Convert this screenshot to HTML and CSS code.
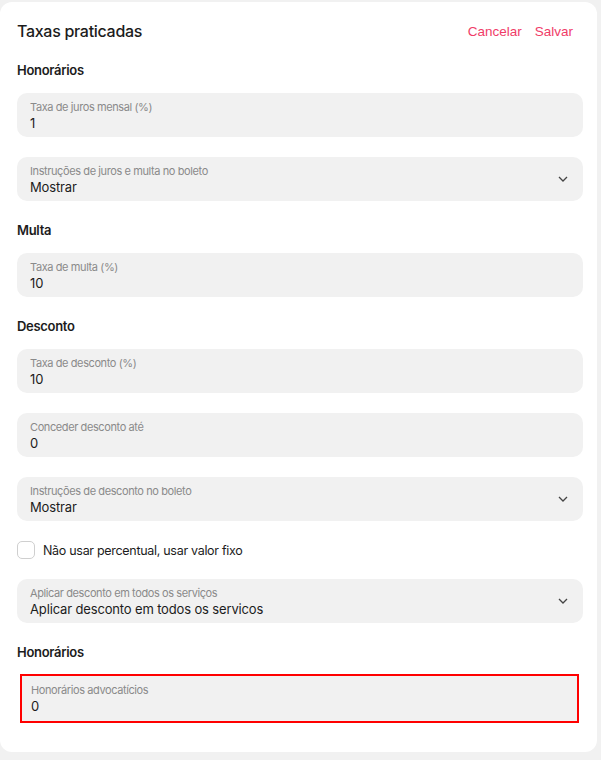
FILE: index.html
```html
<!DOCTYPE html>
<html lang="pt-BR">
<head>
<meta charset="utf-8">
<title>Taxas praticadas</title>
<link rel="stylesheet" href="styles.css">
</head>
<body>
<div class="card">
  <div class="header">
    <h1 class="title">Taxas praticadas</h1>
    <div class="actions">
      <button class="link">Cancelar</button>
      <button class="link">Salvar</button>
    </div>
  </div>

  <h2 class="section">Honorários</h2>
  <div class="field">
    <span class="label">Taxa de juros mensal (%)</span>
    <span class="value">1</span>
  </div>
  <div class="field select">
    <span class="label">Instruções de juros e multa no boleto</span>
    <span class="value">Mostrar</span>
    <svg class="chev" width="10" height="6" viewBox="0 0 10 6"><path d="M1 1l4 4 4-4" fill="none" stroke="#444" stroke-width="1.3"/></svg>
  </div>

  <h2 class="section">Multa</h2>
  <div class="field">
    <span class="label">Taxa de multa (%)</span>
    <span class="value">10</span>
  </div>

  <h2 class="section">Desconto</h2>
  <div class="field">
    <span class="label">Taxa de desconto (%)</span>
    <span class="value">10</span>
  </div>
  <div class="field">
    <span class="label">Conceder desconto até</span>
    <span class="value">0</span>
  </div>
  <div class="field select">
    <span class="label">Instruções de desconto no boleto</span>
    <span class="value">Mostrar</span>
    <svg class="chev" width="10" height="6" viewBox="0 0 10 6"><path d="M1 1l4 4 4-4" fill="none" stroke="#444" stroke-width="1.3"/></svg>
  </div>
  <label class="check">
    <span class="box"></span>
    <span class="check-text">Não usar percentual, usar valor fixo</span>
  </label>
  <div class="field select">
    <span class="label">Aplicar desconto em todos os serviços</span>
    <span class="value">Aplicar desconto em todos os servicos</span>
    <svg class="chev" width="10" height="6" viewBox="0 0 10 6"><path d="M1 1l4 4 4-4" fill="none" stroke="#444" stroke-width="1.3"/></svg>
  </div>

  <h2 class="section">Honorários</h2>
  <div class="field highlight">
    <span class="label">Honorários advocatícios</span>
    <span class="value">0</span>
  </div>
</div>
</body>
</html>
```

FILE: styles.css
```css
* { box-sizing: border-box; }
body {
  margin: 0;
  background: #f1f1f1;
  font-family: Inter, "Noto Sans", sans-serif;
  color: #1c1c1c;
}
.card {
  background: #fff;
  margin: 2px 4px 0 0;
  height: 750px;
  border-radius: 12px;
  padding: 18px 14px 29px 17px;
  display: flex;
  flex-direction: column;
}
.header {
  display: flex;
  justify-content: space-between;
  align-items: center;
  height: 24px;
}
.title {
  margin: 0;
  font-size: 16px;
  font-weight: 500;
  letter-spacing: -0.3px;
  color: #1c1c1c;
}
.actions {
  display: flex;
  gap: 13px;
  padding-right: 10px;
}
.link {
  border: 0;
  background: none;
  padding: 0;
  font-family: "Liberation Sans", Arial, sans-serif;
  font-size: 13.5px;
  color: #f03c68;
  cursor: pointer;
}
.section {
  margin: 20px 0 14px;
  font-size: 13px;
  line-height: 18px;
  font-weight: 600;
  letter-spacing: -0.3px;
}
.header + .section { margin-top: 19px; }
.field {
  position: relative;
  background: #f1f1f1;
  border-radius: 10px;
  height: 44px;
  padding: 7px 13px 0;
  display: flex;
  flex-direction: column;
  flex-shrink: 0;
}
.field + .field, .check + .field { margin-top: 20px; }
.label {
  font-size: 11px;
  line-height: 14px;
  color: #8a8a8a;
  letter-spacing: -0.4px;
}
.value {
  font-size: 13px;
  line-height: 18px;
  color: #1c1c1c;
  letter-spacing: -0.15px;
}
.chev {
  position: absolute;
  right: 15px;
  top: 19px;
}
.check {
  display: flex;
  align-items: center;
  gap: 8px;
  margin-top: 20px;
  height: 18px;
}
.box {
  width: 18px;
  height: 18px;
  border: 1px solid #cfcfcf;
  border-radius: 5px;
  background: #fff;
}
.check-text {
  font-size: 12.5px;
  letter-spacing: -0.3px;
}
.highlight {
  border: 2px solid #ff0000;
  border-radius: 0;
  height: 49px;
  margin: -1px 4px 0 3px;
  padding: 7px 9px 0;
}
```
